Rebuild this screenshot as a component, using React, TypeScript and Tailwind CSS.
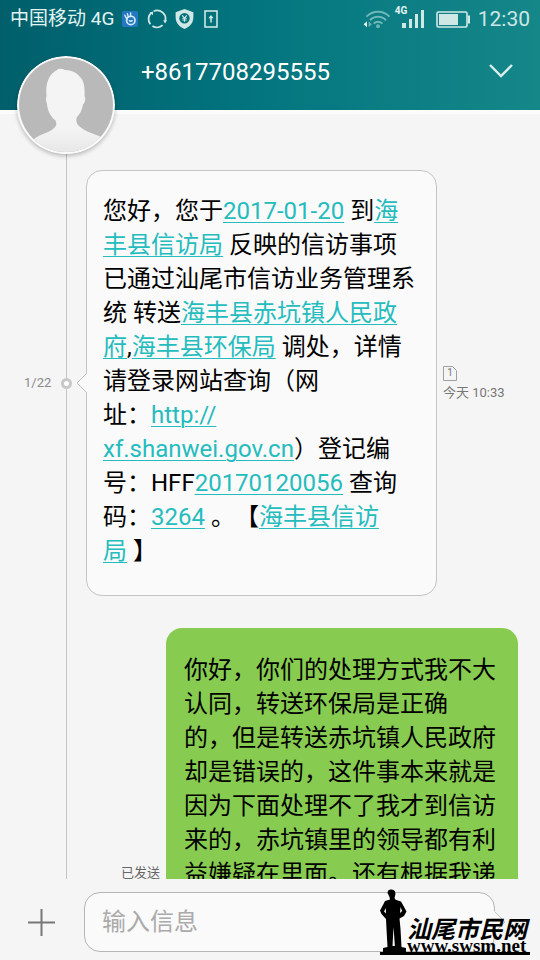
import React from "react";

interface MessageLinkProps {
  href: string;
  children: React.ReactNode;
}

const MessageLink: React.FC<MessageLinkProps> = ({ href, children }) => (
  <a href={href} className="text-[#25bcbe] underline decoration-1 underline-offset-3">
    {children}
  </a>
);

const StatusBar = () => (
  <div className="flex h-[38px] items-center justify-between px-[10px] text-[#e3f3f2]">
    <div className="flex items-center">
      <span className="text-[19px] leading-6">中国移动 4G</span>
      {/* Gesture app badge */}
      <svg className="ml-2 h-4 w-4" viewBox="0 0 16 16" fill="none">
        <rect width="16" height="16" rx="2" fill="#2478c2" />
        <circle cx="8.8" cy="9.4" r="4.2" stroke="#d9edf5" strokeWidth="1.6" />
        <path d="M5 8.4 2.8 4.2M6.4 6.4 5.4 2.6M8.6 5.6V2" stroke="#d9edf5" strokeWidth="1.4" strokeLinecap="round" />
        <path d="M7 9.2q1.8 2 3.6 0" stroke="#d9edf5" strokeWidth="1.4" />
      </svg>
      {/* Sync */}
      <svg className="ml-[9px] h-5 w-5" viewBox="0 0 20 20" fill="none" stroke="#cfe7e5" strokeWidth="1.8">
        <path d="M6.6 2.2A8.4 8.4 0 0 1 18.2 12" />
        <path d="M15.6 16.2A8.4 8.4 0 0 1 5.4 17" />
        <path d="M3.4 15.200A8.400 8.400 0 0 1 4.400 3.600" />
        <path d="M16 11.400l4-.2-1.800 3.400zM2.600 3.400l3.600-.8-.4 3.600z" fill="#cfe7e5" stroke="none" />
      </svg>
      {/* Payment shield */}
      <svg className="ml-2 h-5 w-[19px]" viewBox="0 0 19 20">
        <path d="M9.5 0 18.4 3.2V8c0 5.8-3.4 9.8-8.9 12C4 17.8.6 13.8.6 8V3.2z" fill="#cfe7e5" />
        <circle cx="9.5" cy="9.2" r="5.2" fill="#05717a" />
        <path d="M7.2 6.3l2.3 2.8 2.3-2.8M9.5 9v3.8M7.3 9.2h4.4M7.3 11h4.400" stroke="#cfe7e5" strokeWidth="1.1" fill="none" />
      </svg>
      {/* SIM update */}
      <svg className="ml-[10px] h-[18px] w-[14px]" viewBox="0 0 14 18" fill="none" stroke="#cfe7e5">
        <rect x="1" y="1" width="12" height="16" strokeWidth="1.6" />
        <path d="M7 12.500V7" strokeWidth="1.6" />
        <path d="M4.400 8.200 7 5l2.600 3.200z" fill="#cfe7e5" stroke="none" />
      </svg>
    </div>

    <div className="flex items-center">
      {/* Wi-Fi */}
      <svg className="h-5 w-7" viewBox="0 0 28 20" fill="none">
        <g stroke="#6fb7b6" strokeWidth="2">
          <path d="M3.500 7.600a16 16 0 0 1 23 0" />
          <path d="M7 11.200a11 11 0 0 1 16 0" />
          <path d="M10.600 14.600a6.200 6.200 0 0 1 8.800 0" />
        </g>
        <circle cx="15" cy="17.200" r="1.900" fill="#6fb7b6" />
        <path d="M4 12.200v6L.6 15.200z" fill="#e3f3f2" />
        <path d="M5.600 12.200v6l3.200-3z" fill="#6fb7b6" />
      </svg>
      {/* Signal */}
      <div className="relative ml-[11px]">
        <svg className="h-5 w-[23px]" viewBox="0 0 23 20" fill="#cfe7e5">
          <rect x="0" y="14" width="4" height="5" />
          <rect x="7" y="10" width="3" height="9" />
          <rect x="13" y="5" width="3" height="14" />
          <rect x="19" y="1" width="3" height="18" />
        </svg>
        <span className="absolute -left-[7px] -top-1 text-[10px] font-bold leading-3">4G</span>
      </div>
      {/* Battery */}
      <svg className="ml-[11px] h-[17px] w-[34px]" viewBox="0 0 34 17">
        <rect x="1" y="1" width="30" height="15" rx="1.500" fill="none" stroke="#d3eae8" strokeWidth="1.600" />
        <rect x="3" y="3" width="19" height="11" fill="#cfe7e5" />
        <rect x="32" y="4.500" width="2" height="8" fill="#d3eae8" />
      </svg>
      <span className="ml-2 text-[21px] leading-6 text-[#cde6e5]">12:30</span>
    </div>
  </div>
);

const Avatar = () => (
  <svg
    className="h-[98px] w-[98px] rounded-full shadow-[0_2px_4px_rgba(0,0,0,0.25)]"
    viewBox="0 0 98 98"
    role="img"
    aria-label="联系人"
  >
    <defs>
      <clipPath id="face">
        <circle cx="49" cy="49" r="47" />
      </clipPath>
      <linearGradient id="person" x1="0" y1="0" x2="0" y2="1">
        <stop offset="0.7" stopColor="#f4f4f4" />
        <stop offset="1" stopColor="#e6e6e6" />
      </linearGradient>
    </defs>
    <circle cx="49" cy="49" r="49" fill="#fbfbfb" />
    <g clipPath="url(#face)">
      <rect width="98" height="98" fill="#b9b9b9" />
      <path
        d="M40 14C42 12 45 12.500 48 14C55 14 60 17 63 21C67 25 68 31 67.500 40C69 42 68 47 66 48.500C65 54 63 58 60 61C59 64 59 66 61 69C66 75 78 78 84 81L90 98H8L17 83C23 78 35 76 38 71C40 69 39.500 66 38 64C33 60 30.500 54 30 48C28.500 44 29 42 29.500 40C28.500 28 31 19 40 14Z"
        fill="url(#person)"
      />
    </g>
  </svg>
);

const Watermark = () => (
  <div className="pointer-events-none absolute bottom-[5px] right-[10px] w-[150px] border-b-[3px] border-black text-black">
    <div className="flex items-end">
      <svg className="h-[63px] w-[27px] shrink-0" viewBox="0 0 27 63">
        <path d="M7.500 4 8 1.800C10 -.2 14 0 15 2.600L15.500 5 14.500 9 15.500 10.800 21 12.500 23 16 26.500 22.500 24 27 19.500 29.500 20.500 40 21.500 58 26 59V63H3V59L7.500 58 6.500 40 6 30 1.500 25 0 21.500 3.500 15 5 12 10 10.500 9.500 8Z" />
        <path d="M13.500 38 12.500 57h2.400z" fill="#f5f5f5" />
        <path d="M5.800 19 4 22.500l2 2zM20.500 18l-.5 6 2.200-2z" fill="#f5f5f5" />
      </svg>
      <div className="flex flex-col">
        <span className="font-['Noto_Sans_CJK_SC',sans-serif] text-[24px] font-bold italic leading-6">汕尾市民网</span>
        <span className="font-['Liberation_Serif',serif] text-[19px] font-bold leading-3">www.swsm.net</span>
      </div>
    </div>
  </div>
);

function App() {
  return (
    <div className="relative flex h-screen flex-col overflow-hidden bg-[#f5f5f5] font-['Roboto','Noto_Sans_CJK_SC',sans-serif] [text-spacing-trim:space-all]">
      <header className="relative z-10 bg-linear-to-r from-[#005f6b] via-[#03767f] to-[#158789]">
        <StatusBar />
        <div className="flex h-[72px] items-start justify-between pl-[141px] pr-[26px] pt-[18px]">
          <h1 className="text-[24px] leading-8 text-white">+8617708295555</h1>
          <button type="button" aria-label="展开" className="mt-[6px]">
            <svg className="h-5 w-[26px]" viewBox="0 0 26 20" fill="none" stroke="#d9eeed" strokeWidth="2.400">
              <path d="M2 3 13 14 24 3" />
            </svg>
          </button>
        </div>
        <div className="absolute left-[17px] top-[56px]">
          <Avatar />
        </div>
      </header>

      <main className="relative min-h-0 flex-1 overflow-hidden border-t-4 border-[#fcfcfc] pt-14">
        {/* Timeline */}
        <div className="absolute inset-y-0 left-[66px] w-px bg-[#c4c4c4]" />

        <article className="flex items-center">
          <div className="relative flex w-[86px] shrink-0 items-center justify-between pl-6 pr-[14px]">
            <span className="text-[13px] leading-4 text-[#8a8a8a]">1/22</span>
            <span className="h-[11px] w-[11px] rounded-full border-[3px] border-[#c8c8c8] bg-white" />
          </div>
          <div className="relative w-[351px] rounded-2xl border border-[#c4c4c4] bg-[#fafafa] pb-[27px] pl-4 pr-4 pt-[23px]">
            <svg className="absolute -left-[11px] top-1/2 h-[22px] w-[12px] -translate-y-1/2" viewBox="0 0 12 22">
              <path d="M12 0V22L11 21 1 11 11 1Z" fill="#fafafa" />
              <path d="M11 1 1 11 11 21" fill="none" stroke="#c4c4c4" />
            </svg>
            <p className="text-[24px] leading-[34px] text-black">
              您好，您于<MessageLink href="#date">2017-01-20</MessageLink> 到
              <MessageLink href="#bureau">海丰县信访局</MessageLink> 反映的信访事项
              <br />
              已通过汕尾市信访业务管理系统 转送<MessageLink href="#town">海丰县赤坑镇人民政府</MessageLink>,
              <MessageLink href="#epa">海丰县环保局</MessageLink> 调处，详情
              <br />
              请登录网站查询（网
              <br />
              址：
              <MessageLink href="#site">
                http://
                <br />
                xf.shanwei.gov.cn
              </MessageLink>
              ）登记编
              <br />
              号：HFF<MessageLink href="#number">20170120056</MessageLink> 查询
              <br />
              码：<MessageLink href="#code">3264</MessageLink> 。【
              <MessageLink href="#sender">
                海丰县信访
                <br />局
              </MessageLink>{" "}
              】
            </p>
          </div>
          <div className="ml-[6px] flex flex-col gap-1 text-[#777777]">
            <div className="relative flex h-[15px] w-[14px] items-center justify-center text-[10px] leading-3">
              <svg className="absolute inset-0" viewBox="0 0 14 15" fill="none" stroke="#a0a0a0">
                <path d="M.5.5h9l4 4v10H.5z" />
              </svg>
              1
            </div>
            <time className="text-[13px] leading-4">今天 10:33</time>
          </div>
        </article>

        <article className="mt-8 flex items-center justify-end pr-[22px]">
          <span className="mr-[6px] text-[13px] leading-4 text-[#666666]">已发送</span>
          <div className="min-h-[490px] w-[352px] rounded-2xl bg-[#87cb50] px-[18px] pt-[25px]">
            <p className="text-[24px] leading-[34px] text-black">
              你好，你们的处理方式我不大认同，转送环保局是正确
              <br />
              的，但是转送赤坑镇人民政府却是错误的，这件事本来就是因为下面处理不了我才到信访来的，赤坑镇里的领导都有利益嫌疑在里面。还有根据我递
            </p>
          </div>
        </article>
      </main>

      <footer className="flex h-[81px] shrink-0 items-center pb-[8px] pl-7 pr-[45px] pt-[13px]">
        <button type="button" aria-label="添加" className="shrink-0">
          <svg className="h-[27px] w-[27px]" viewBox="0 0 27 27" stroke="#777777" strokeWidth="2">
            <path d="M13.500 0V27M0 13.500H27" />
          </svg>
        </button>
        <div className="relative ml-[29px] flex-1">
          <input
            type="text"
            aria-label="输入信息"
            placeholder="输入信息"
            className="h-[60px] w-full rounded-2xl border border-[#b5b5b5] bg-[#fafafa] px-[17px] text-[24px] leading-8 outline-none placeholder:text-[#aaaaaa]"
          />
          <svg className="absolute -right-[11px] top-[19px] h-[22px] w-[12px]" viewBox="0 0 12 22">
            <path d="M0 0V22L1 21 11 11 1 1Z" fill="#fafafa" />
            <path d="M1 1 11 11 1 21" fill="none" stroke="#c4c4c4" />
          </svg>
        </div>
      </footer>

      <Watermark />
    </div>
  );
}

export default App;
